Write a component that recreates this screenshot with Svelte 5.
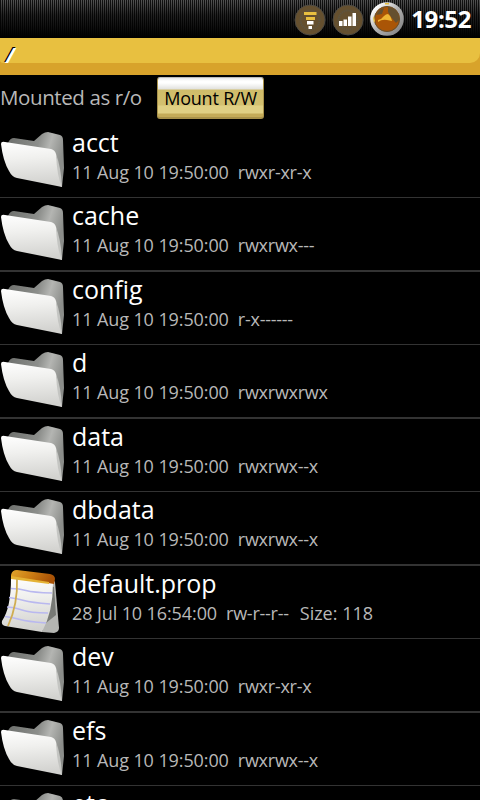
<script>
  const entries = [
    { name: 'acct', date: '11 Aug 10 19:50:00', mode: 'rwxr-xr-x' },
    { name: 'cache', date: '11 Aug 10 19:50:00', mode: 'rwxrwx---' },
    { name: 'config', date: '11 Aug 10 19:50:00', mode: 'r-x------' },
    { name: 'd', date: '11 Aug 10 19:50:00', mode: 'rwxrwxrwx' },
    { name: 'data', date: '11 Aug 10 19:50:00', mode: 'rwxrwx--x' },
    { name: 'dbdata', date: '11 Aug 10 19:50:00', mode: 'rwxrwx--x' },
    { name: 'default.prop', date: '28 Jul 10 16:54:00', mode: 'rw-r--r--', size: 118 },
    { name: 'dev', date: '11 Aug 10 19:50:00', mode: 'rwxr-xr-x' },
    { name: 'efs', date: '11 Aug 10 19:50:00', mode: 'rwxrwx--x' },
    { name: 'etc' }
  ];
</script>

<svg class="defs" width="0" height="0" aria-hidden="true">
  <defs>
    <linearGradient id="front" x1="0" y1="0" x2="0.1" y2="1">
      <stop offset="0" stop-color="#fff" />
      <stop offset="0.4" stop-color="#f0f0ee" />
      <stop offset="1" stop-color="#d2d2cf" />
    </linearGradient>
    <linearGradient id="back" x1="0" y1="0" x2="1" y2="0.3">
      <stop offset="0" stop-color="#6c6e6b" />
      <stop offset="0.55" stop-color="#8c8e8b" />
      <stop offset="0.75" stop-color="#b4b5b2" />
      <stop offset="1" stop-color="#8b8d8a" />
    </linearGradient>
    <linearGradient id="binding" x1="0" y1="0" x2="1" y2="0.2">
      <stop offset="0" stop-color="#e0a52c" />
      <stop offset="0.5" stop-color="#cc7d14" />
      <stop offset="1" stop-color="#a85206" />
    </linearGradient>
    <linearGradient id="ring" x1="0" y1="0" x2="1" y2="1">
      <stop offset="0.1" stop-color="#fff" />
      <stop offset="0.5" stop-color="#b0b0b0" />
      <stop offset="1" stop-color="#808080" />
    </linearGradient>
  </defs>
</svg>

<div class="screen">
  <header class="status-bar">
    <svg class="status-icon" width="32" height="32" viewBox="0 0 32 32">
      <circle cx="16" cy="16" r="15" fill="#65502f" stroke="#4d4a43" />
      <circle cx="16" cy="16" r="9.500" fill="none" stroke="#5b5646" stroke-width="2" stroke-dasharray="1 1" />
      <path d="M10 8h12.500v3H10zM12 13h9v3h-9z" fill="#e8c040" />
      <path d="M13 17h6.500v3.500H13zM14.500 22H18v3h-3.500z" fill="#fff" />
    </svg>
    <svg class="status-icon" width="32" height="32" viewBox="0 0 32 32">
      <circle cx="16" cy="16" r="15" fill="#65502f" stroke="#4d4a43" />
      <circle cx="16" cy="16" r="9.500" fill="none" stroke="#5b5646" stroke-width="2" stroke-dasharray="1 1" />
      <path d="M7 17h3.500v5H7zM11.500 15.500H15V22h-3.500zM16 12.500h3.500V22H16zM20.500 9H24v13h-3.500z" fill="#fff" />
    </svg>
    <svg class="clock-icon" width="36" height="36" viewBox="0 0 36 36">
      <circle cx="18" cy="18" r="14.800" fill="#aa5506" stroke="url(#ring)" stroke-width="4" />
      <circle cx="18" cy="18" r="12.500" fill="none" stroke="#65502f" stroke-width="1" />
      <path d="M19 6q11 1 11 13l-3 3-5-6-3-5z" fill="#65502f" />
      <path d="M7 14q3-6 8-7l-2 6z" fill="#65502f" />
      <path d="M9 19q4-1 6-4 2-2 4-2 3 2 4 7l-5-1q-5-1-9 2z" fill="#eeb634" />
      <path d="M4 17l1-2 1 5-1 2zM16 2h4v1.500h-4z" fill="#e8c040" />
    </svg>
    <span class="time">19:52</span>
  </header>

  <div class="path-bar"><span class="path">/</span></div>

  <div class="mount">
    <span class="mount-state">Mounted as r/o</span>
    <button class="mount-button">Mount R/W</button>
  </div>

  <ul class="files">
    {#each entries as entry}
      <li class="entry">
        {#if entry.size}
          <svg class="entry-icon" width="64" height="64" viewBox="0 0 64 64">
            <path d="M52 8l3 4 4 46q0 4-5 5l-12-1z" fill="#b4b5b2" />
            <path d="M51 16l3 1 2 28-10 8z" fill="#777975" />
            <path d="M11 8L53 13Q53 42 42 62L5 56Q1 55 2 51Q11 38 11 8z" fill="url(#front)" />
            <path d="M11 5q1-5 6-5l33 4q5 1 5 5l-1 5-6-1-37-5z" fill="url(#binding)" />
            <path d="M11 6l38 6v2L11 9z" fill="#e5b335" />
            <g fill="none" stroke="#b9b8ef" stroke-width="1.500">
              <path d="M11 18.500q8 0 15 2t26 2.500" />
              <path d="M9 27.500q8 1 15 3t26 3.500" />
              <path d="M7 37q7 0 15 3t26 3" />
              <path d="M5 46.500q8 1 15 3t26 3.500" />
            </g>
            <path d="M17 9q1 25-9 47" fill="none" stroke="#d0ad50" stroke-width="1.800" />
          </svg>
        {:else}
          <svg class="entry-icon" width="64" height="64" viewBox="0 0 64 64">
            <path d="M8 14q2-5 6-5l20 3 8-7q3-2 6-2l12 3q3 1 3 5l1 28-2 19-9-4z" fill="url(#back)" />
            <path d="M1 15q0-3 4-2l46 7q4 1 5 5l6 33L17 49q-5-1-8-7Q3 32 1 15z" fill="url(#front)" />
            <path d="M56 25q5 13 6 33-5-10-6-33z" fill="#c4c5c2" />
          </svg>
        {/if}
        <div class="info">
          <div class="name">{entry.name}</div>
          {#if entry.date}
            <div class="meta">
              <span>{entry.date}</span>
              <span class="mode">{entry.mode}</span>
              {#if entry.size}<span class="size">Size: {entry.size}</span>{/if}
            </div>
          {/if}
        </div>
      </li>
    {/each}
  </ul>
</div>

<style>
  :global(body) {
    background: #000;
    overflow: hidden;
  }

  .defs {
    display: block;
  }

  .screen {
    width: 480px;
    height: 800px;
    overflow: hidden;
    background: #000;
    color: #fff;
    font-family: "Open Sans", "Noto Sans", sans-serif;
  }

  .status-bar {
    display: flex;
    align-items: center;
    justify-content: flex-end;
    box-sizing: border-box;
    height: 38px;
    padding-right: 9px;
    background:
      linear-gradient(to bottom, transparent, rgba(0, 0, 0, 0.6) 15px, #000 37px),
      repeating-linear-gradient(to right, #111 0 1px, #555 1px 2px);
  }

  .status-icon {
    margin: 2px 6px 0 0;
  }

  .clock-icon {
    margin: 0 6px 0 -1px;
  }

  .time {
    font-size: 24px;
    font-weight: 700;
    letter-spacing: -0.4px;
    line-height: 38px;
  }

  .path-bar {
    box-sizing: border-box;
    height: 37px;
    background: #d8a32b;
  }

  .path {
    display: block;
    box-sizing: border-box;
    height: 25px;
    padding-left: 6px;
    border-radius: 0 0 10px 3px;
    background: #e8c040;
    font-size: 21px;
    font-weight: 700;
    font-style: italic;
    line-height: 35px;
    text-shadow: -1px -1px 0 #000;
  }

  .mount {
    display: flex;
    height: 50px;
  }

  .mount-state {
    width: 157px;
    color: #b8b8b8;
    font-size: 20.5px;
    letter-spacing: -0.4px;
    line-height: 45px;
    white-space: nowrap;
  }

  .mount-button {
    width: 107px;
    height: 42px;
    margin-top: 2px;
    padding: 1px 0 0;
    border: 1px solid #a9924a;
    border-top-color: #bbb;
    border-bottom-width: 2px;
    border-radius: 3px;
    background: linear-gradient(to bottom, #e8e8e8 0, #fff 3px 5px, #e2e2df 11px, #d0bc69 12px, #d3c070 27px, #e0d084 28px 35px, #c4ab58 36px);
    color: #000;
    font-family: inherit;
    font-size: 18px;
    letter-spacing: -0.2px;
    white-space: nowrap;
  }

  .files {
    margin: 0;
    padding: 0;
    list-style: none;
  }

  .entry {
    display: flex;
    height: 72px;
    border-bottom: 1px solid #333;
  }

  .entry:nth-child(even) {
    border-bottom-width: 2px;
  }

  .entry-icon {
    flex: none;
    margin: 4px 8px 0 0;
  }

  .name {
    height: 35px;
    font-size: 25px;
    line-height: 35px;
  }

  .meta {
    display: flex;
    gap: 9px;
    color: #b8b8b8;
    font-size: 18px;
    letter-spacing: -0.1px;
    line-height: 24px;
    white-space: nowrap;
  }

  .mode {
    letter-spacing: -0.25px;
  }

  .size {
    margin-left: 2px;
    letter-spacing: 0;
  }
</style>
